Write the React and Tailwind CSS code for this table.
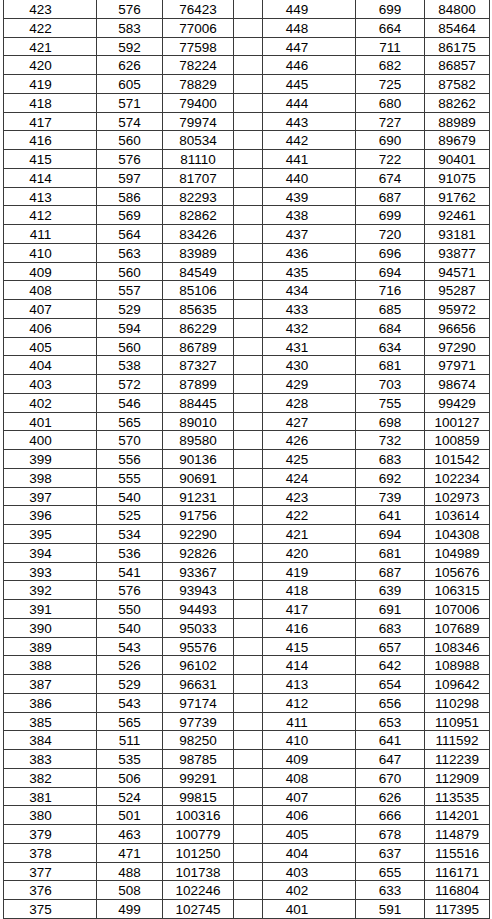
const leftCounts = [576, 583, 592, 626, 605, 571, 574, 560, 576, 597, 586, 569, 564, 563, 560, 557, 529, 594, 560, 538, 572, 546, 565, 570, 556, 555, 540, 525, 534, 536, 541, 576, 550, 540, 543, 526, 529, 543, 565, 511, 535, 506, 524, 501, 463, 471, 488, 508, 499];
const leftTotals = [76423, 77006, 77598, 78224, 78829, 79400, 79974, 80534, 81110, 81707, 82293, 82862, 83426, 83989, 84549, 85106, 85635, 86229, 86789, 87327, 87899, 88445, 89010, 89580, 90136, 90691, 91231, 91756, 92290, 92826, 93367, 93943, 94493, 95033, 95576, 96102, 96631, 97174, 97739, 98250, 98785, 99291, 99815, 100316, 100779, 101250, 101738, 102246, 102745];
const rightCounts = [699, 664, 711, 682, 725, 680, 727, 690, 722, 674, 687, 699, 720, 696, 694, 716, 685, 684, 634, 681, 703, 755, 698, 732, 683, 692, 739, 641, 694, 681, 687, 639, 691, 683, 657, 642, 654, 656, 653, 641, 647, 670, 626, 666, 678, 637, 655, 633, 591];
const rightTotals = [84800, 85464, 86175, 86857, 87582, 88262, 88989, 89679, 90401, 91075, 91762, 92461, 93181, 93877, 94571, 95287, 95972, 96656, 97290, 97971, 98674, 99429, 100127, 100859, 101542, 102234, 102973, 103614, 104308, 104989, 105676, 106315, 107006, 107689, 108346, 108988, 109642, 110298, 110951, 111592, 112239, 112909, 113535, 114201, 114879, 115516, 116171, 116804, 117395];

const rows = leftCounts.map((_, i) => ({
  ls: 423 - i,
  lc: leftCounts[i],
  lt: leftTotals[i],
  rs: 449 - i,
  rc: rightCounts[i],
  rt: rightTotals[i],
}));

const cell = "border border-[#3a3a3a] text-center align-middle p-0 pt-[2px] leading-none";

export default function App() {
  return (
    <div className="bg-white w-[492px] h-[919px] overflow-hidden pl-[3px]">
      <table
        className="table-fixed border-collapse -mt-px text-black text-[13.5px]"
        style={{ fontFamily: '"Liberation Sans", Arial, sans-serif', width: 486 }}
      >
        <colgroup>
          <col className="w-[93px]" />
          <col className="w-[66px]" />
          <col className="w-[71px]" />
          <col className="w-[29px]" />
          <col className="w-[93px]" />
          <col className="w-[69px]" />
          <col className="w-[65px]" />
        </colgroup>
        <tbody>
          {rows.map((r) => (
            <tr key={r.ls} className="h-[18.76px]">
              <td className={`${cell} pr-[19px]`}>{r.ls}</td>
              <td className={cell}>{r.lc}</td>
              <td className={cell}>{r.lt}</td>
              <td className={cell}></td>
              <td className={`${cell} pr-[24px]`}>{r.rs}</td>
              <td className={cell}>{r.rc}</td>
              <td className={cell}>{r.rt}</td>
            </tr>
          ))}
        </tbody>
      </table>
    </div>
  );
}
